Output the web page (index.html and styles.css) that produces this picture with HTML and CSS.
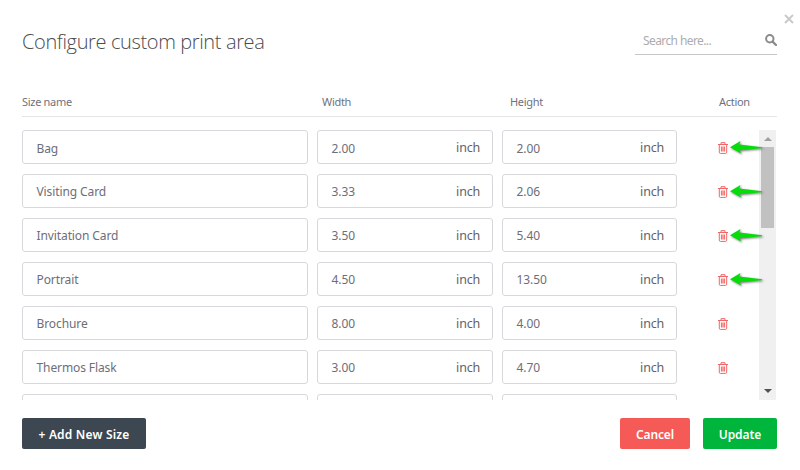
FILE: index.html
```html
<!DOCTYPE html>
<html lang="en">
<head>
<meta charset="utf-8">
<title>Configure custom print area</title>
<link rel="stylesheet" href="styles.css">
</head>
<body>
<svg class="defs" aria-hidden="true">
  <symbol id="trash" viewBox="0 0 10 12"><path d="M3.5 4.5H6.5V9.5H3.5Z" fill="#fbdada"/><path d="M0 2.5H10M3 2.3V.7H7V2.3M1.3 2.8V10.2Q1.3 11.4 2.3 11.4H7.7Q8.7 11.4 8.7 10.2V2.8M3.4 4.5V9.5M5 4.5V9.5M6.6 4.5V9.5" fill="none" stroke="currentColor"/></symbol>
  <symbol id="arrow" viewBox="0 0 33 14"><path d="M0 6.2 10.5 0 9.3 3.6 32 6.2V7.2L9.3 9.3 11.5 12.8Z" fill="#07dc0b"/></symbol>
</svg>
<button class="close" aria-label="Close"><svg width="10" height="10" viewBox="0 0 10 10"><path d="M1 1 9 9M9 1 1 9" stroke="#c9c9c9" stroke-width="1.9"/></svg></button>
<main class="dialog">
  <header class="top">
    <h1>Configure custom print area</h1>
    <div class="search"><span>Search here...</span><svg width="12" height="12" viewBox="0 0 12 12"><circle cx="4.8" cy="4.8" r="3.7" fill="none" stroke="#8b8b8b" stroke-width="2"/><path d="M7.6 7.6 11 11" stroke="#8b8b8b" stroke-width="2.3" stroke-linecap="round"/></svg></div>
  </header>
  <div class="heads"><span>Size name</span><span>Width</span><span>Height</span><span>Action</span></div>
  <section class="list">
    <div class="rows" id="rows"></div>
    <div class="scrollbar"><i class="up"></i><i class="thumb"></i><i class="down"></i></div>
  </section>
  <footer class="actions"><button class="btn add">+ Add New Size</button><button class="btn cancel">Cancel</button><button class="btn update">Update</button></footer>
</main>
<script src="rows.js"></script>
</body>
</html>
```
FILE: styles.css
```css
* { box-sizing: border-box; }
body { margin: 0; width: 800px; height: 470px; overflow: hidden; position: relative; background: #fff; color: #6d6e79; font: 12px/16px "Noto Sans", "Open Sans", sans-serif; }
button { border: 0; padding: 0; background: none; font: inherit; }
svg { display: block; }
.defs { position: absolute; width: 0; height: 0; }
.close { position: absolute; left: 784px; top: 14px; }
.dialog { padding: 0 23px 0 22px; }
.top { height: 95px; display: flex; justify-content: space-between; align-items: flex-start; }
h1 { margin: 27px 0 0; font: 300 20px/30px "Open Sans", sans-serif; letter-spacing: -0.37px; color: #4b4b50; white-space: nowrap; }
.search { width: 142px; height: 27px; margin-top: 28px; padding: 0 0 0 8px; border-bottom: 1px solid #c8c8c8; display: flex; justify-content: space-between; align-items: center; color: #acacac; letter-spacing: -.6px; }
.search svg { margin-top: -2px; }
.heads { height: 22px; border-bottom: 1px solid #e6e6e8; display: grid; grid-template-columns: 300px 188px 209px 1fr; font-size: 11px; line-height: 13px; letter-spacing: -.3px; color: #70717c; }
.list { margin-top: 13px; height: 270px; overflow: hidden; display: flex; justify-content: space-between; }
.row { height: 34px; margin-bottom: 10px; display: grid; grid-template-columns: 286px 176px 175px 50px; column-gap: 9px; }
.field { border: 1px solid #d8d8dc; border-radius: 3px; padding: 2px 12px 0 13.5px; display: flex; justify-content: space-between; align-items: center; letter-spacing: -.1px; }
.row:first-child .field > span:first-child { margin-top: 1px; }
.field .unit { color: #626266; font-size: 12.5px; letter-spacing: -.2px; }
.row:first-child .field .unit { margin-top: -1px; }
.action { position: relative; display: flex; align-items: center; padding: 2px 0 0 32px; color: #ef6767; }
.arrow { position: absolute; left: 44px; top: 11px; z-index: 1; filter: drop-shadow(1px 1px 1px #777); }
.scrollbar { width: 17px; height: 270px; margin-right: 1px; background: #f0f0f0; display: flex; flex-direction: column; align-items: center; }
.up, .down { border: 4px solid transparent; width: 0; height: 0; }
.up { border-top: 0; border-bottom-color: #a0a0a0; margin: 7px 0 6px; }
.thumb { width: 13px; height: 81px; background: #c1c1c1; }
.down { border-bottom: 0; border-top-color: #505050; margin: auto 0 7px; }
.actions { margin-top: 18px; display: flex; }
.btn { height: 31px; border-radius: 2px; padding-top: 2px; color: #fff; font-weight: 600; letter-spacing: -.1px; white-space: nowrap; }
.add { width: 124px; background: #3d4752; margin-right: auto; letter-spacing: .18px; }
.cancel { width: 70px; background: #f55a56; margin-right: 13px; }
.update { width: 74px; background: #00b53c; }
```
FILE: rows.js
```js
const sizes = [
  ["Bag", "2.00", "2.00"],
  ["Visiting Card", "3.33", "2.06"],
  ["Invitation Card", "3.50", "5.40"],
  ["Portrait", "4.50", "13.50"],
  ["Brochure", "8.00", "4.00"],
  ["Thermos Flask", "3.00", "4.70"],
  ["", "", ""]
];
const field = (value, unit) => `<div class="field"><span>${value}</span>${unit ? `<span class="unit">${unit}</span>` : ""}</div>`;
document.getElementById("rows").innerHTML = sizes.map(([name, w, h], i) => {
  const unit = name ? "inch" : "";
  const arrow = i < 4 ? '<svg class="arrow" width="33" height="14"><use href="#arrow"/></svg>' : "";
  const action = name ? '<svg width="10" height="12"><use href="#trash"/></svg>' + arrow : "";
  return `<div class="row">${field(name)}${field(w, unit)}${field(h, unit)}<div class="action">${action}</div></div>`;
}).join("");
```
